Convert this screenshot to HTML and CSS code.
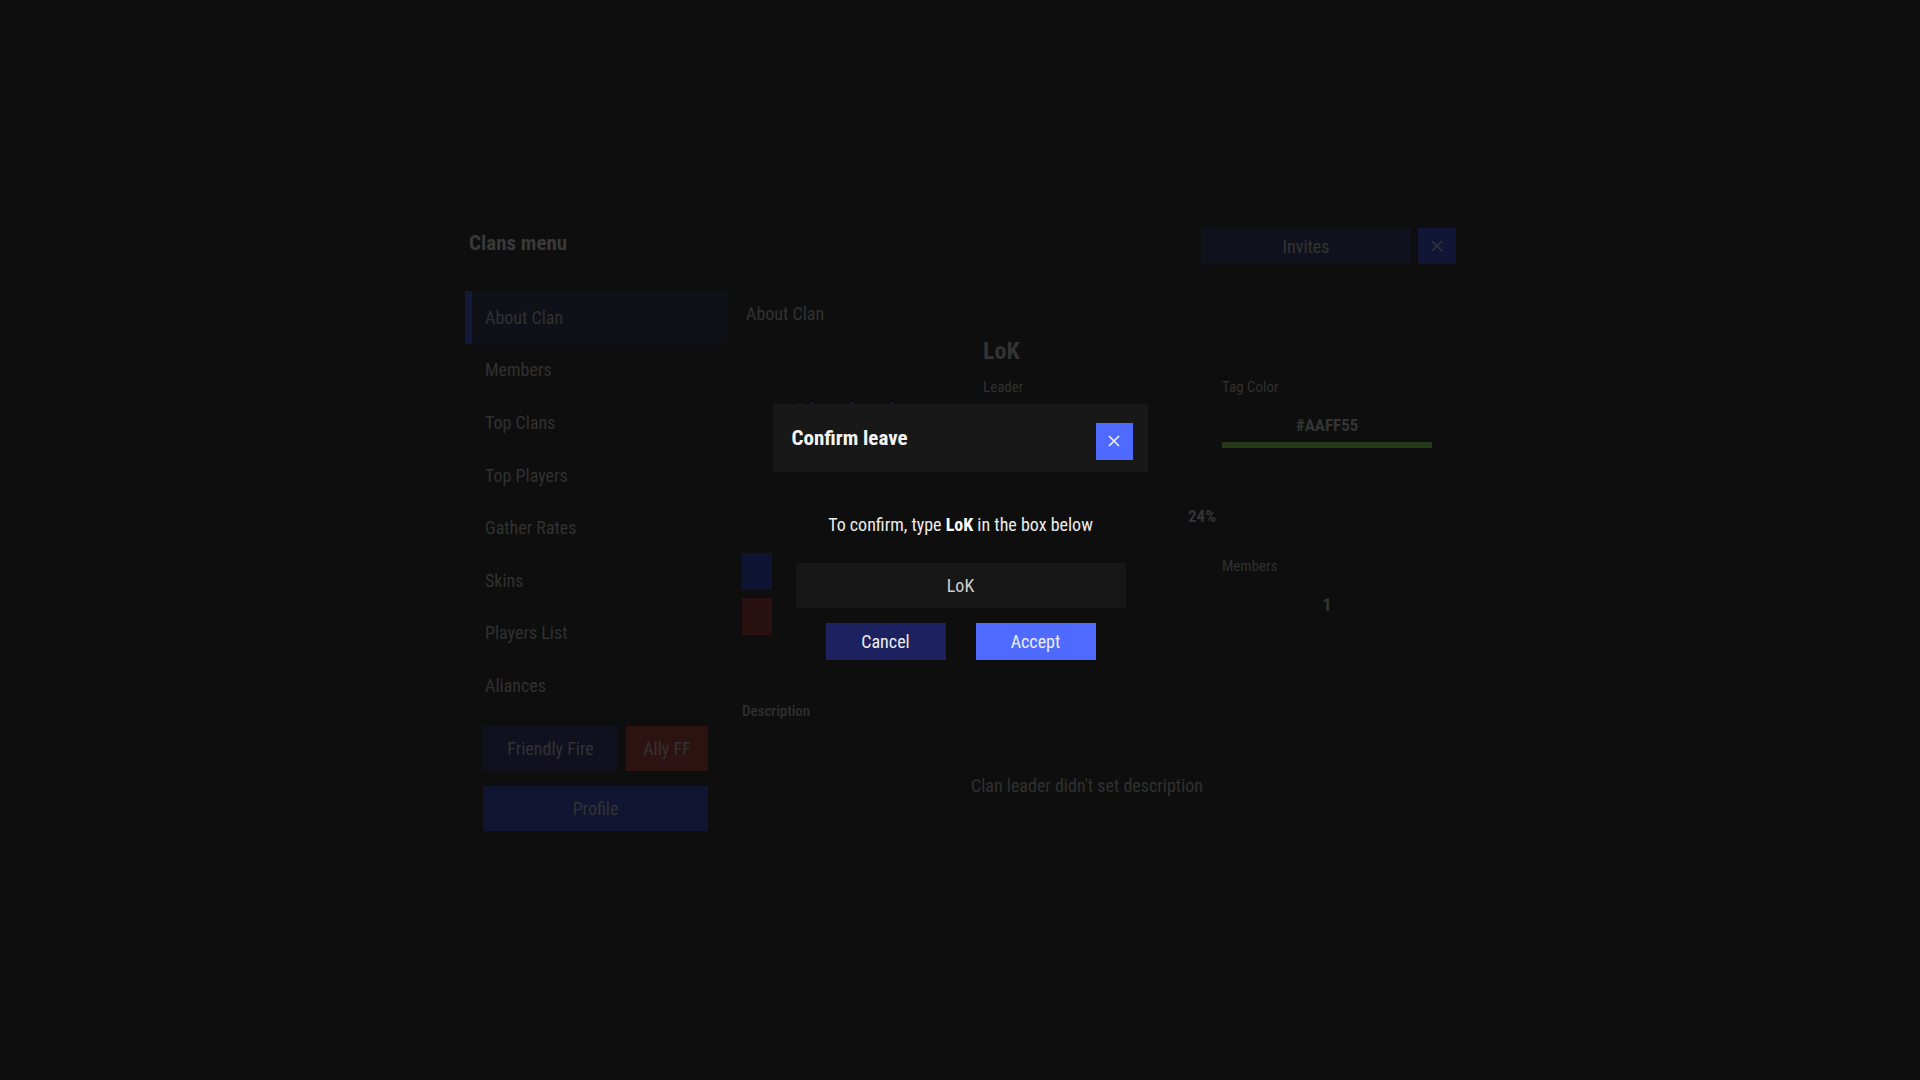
FILE: index.html
```html
<!DOCTYPE html>
<html lang="en">
<head>
<meta charset="utf-8">
<title>Clans menu</title>
<link rel="stylesheet" href="styles.css">
</head>
<body>
<div class="panel">
  <header class="topbar">
    <h1 class="title">Clans menu</h1>
    <div class="top-actions">
      <button class="btn-invites">Invites</button>
      <button class="btn-close-dim" aria-label="Close">
        <svg width="12" height="12" viewBox="0 0 12 12"><path d="M1 1L11 11M11 1L1 11" stroke="#343434" stroke-width="1.6" fill="none"/></svg>
      </button>
    </div>
  </header>
  <div class="body">
    <aside class="sidebar">
      <nav class="menu">
        <div class="menu-item active">About Clan</div>
        <div class="menu-item">Members</div>
        <div class="menu-item">Top Clans</div>
        <div class="menu-item">Top Players</div>
        <div class="menu-item">Gather Rates</div>
        <div class="menu-item">Skins</div>
        <div class="menu-item">Players List</div>
        <div class="menu-item">Aliances</div>
      </nav>
      <div class="side-actions">
        <div class="side-row">
          <button class="btn-ff">Friendly Fire</button>
          <button class="btn-ally">Ally FF</button>
        </div>
        <button class="btn-profile">Profile</button>
      </div>
    </aside>
    <main class="main">
      <div class="main-title">About Clan</div>
      <div class="info">
        <div class="col-left">
          <div class="leader-name">Clan leader</div>
          <div class="sq sq-blue"></div>
          <div class="sq sq-red"></div>
        </div>
        <div class="col-mid">
          <div class="clan-tag">LoK</div>
          <div class="label label-leader">Leader</div>
          <div class="percent">24%</div>
        </div>
        <div class="col-right">
          <div class="label label-tag">Tag Color</div>
          <div class="tag-value">#AAFF55</div>
          <div class="tag-bar"></div>
          <div class="label label-members">Members</div>
          <div class="members-count">1</div>
        </div>
      </div>
      <div class="desc-label">Description</div>
      <div class="desc-text">Clan leader didn't set description</div>
    </main>
  </div>
</div>

<div class="overlay">
  <div class="modal">
    <div class="modal-head">
      <div class="modal-title">Confirm leave</div>
      <button class="modal-close" aria-label="Close">
        <svg width="12" height="12" viewBox="0 0 12 12"><path d="M1 1L11 11M11 1L1 11" stroke="#f2f2f2" stroke-width="1.6" fill="none"/></svg>
      </button>
    </div>
    <div class="modal-body">
      <p class="modal-text">To confirm, type <b>LoK</b> in the box below</p>
      <div class="modal-input">LoK</div>
      <div class="modal-buttons">
        <button class="btn-cancel">Cancel</button>
        <button class="btn-accept">Accept</button>
      </div>
    </div>
  </div>
</div>
</body>
</html>
```
FILE: styles.css
```css
* { box-sizing: border-box; }
html, body { margin: 0; padding: 0; }
body {
  width: 1920px;
  height: 1080px;
  background: #0e0e0e;
  font-family: "Roboto Condensed", "Liberation Sans Narrow", Roboto, sans-serif;
  font-stretch: condensed;
  color: #333;
  overflow: hidden;
}
button {
  font-family: inherit;
  font-stretch: inherit;
  border: 0;
  padding: 0;
  margin: 0;
  cursor: pointer;
}

.panel {
  margin-left: 465px;
  padding-top: 228px;
  width: 991px;
}
.topbar {
  display: flex;
  justify-content: space-between;
  align-items: center;
  height: 36px;
}
.title {
  margin: 0 0 6px 4px;
  font-size: 21px;
  font-weight: 700;
  line-height: 1;
  color: #393939;
}
.top-actions { display: flex; gap: 7px; }
.btn-invites {
  width: 210px;
  height: 36px;
  background: #10111d;
  color: #343434;
  font-size: 18px;
}
.btn-close-dim {
  width: 38px;
  height: 36px;
  background: #111637;
  display: flex;
  align-items: center;
  justify-content: center;
}

.body {
  display: flex;
  margin-top: 27px;
}
.sidebar { width: 262px; flex: none; }
.menu-item {
  height: 52.6px;
  display: flex;
  align-items: center;
  padding-left: 20px;
  font-size: 18px;
  color: #313131;
}
.menu-item.active {
  background: #101018;
  border-left: 7px solid #131939;
  padding-left: 13px;
}
.side-actions {
  padding: 14px 19px 0 18px;
}
.side-row { display: flex; gap: 8px; }
.btn-ff, .btn-ally, .btn-profile {
  height: 45px;
  font-size: 18px;
  color: #333;
}
.btn-ff { width: 135px; background: #10101e; }
.btn-ally { width: 82px; background: #2d1212; }
.btn-profile {
  display: block;
  width: 225px;
  margin-top: 15px;
  background: #121531;
}

.main {
  margin-left: 15px;
  width: 690px;
}
.main-title {
  margin-top: 14px;
  padding-left: 4px;
  font-size: 18px;
  line-height: 1;
  color: #323232;
}
.info {
  display: flex;
  margin-top: 13px;
}
.col-left { width: 241px; display: flex; flex-direction: column; }
.col-mid { width: 239px; display: flex; flex-direction: column; }
.col-right { width: 210px; display: flex; flex-direction: column; }
.leader-name {
  margin-top: 64px;
  padding-left: 50px;
  font-size: 28px;
  font-weight: 700;
  line-height: 1;
  color: #141a44;
}
.sq { width: 30px; height: 37px; }
.sq-blue { background: #0f1433; margin-top: 125px; }
.sq-red { background: #2a1111; margin-top: 8px; }

.clan-tag {
  margin-top: 3px;
  font-size: 24px;
  font-weight: 700;
  line-height: 1;
  color: #333;
}
.label {
  font-size: 15px;
  line-height: 1;
  color: #303030;
}
.label-leader { margin-top: 17px; }
.percent {
  margin-top: 113px;
  padding-right: 6px;
  text-align: right;
  font-size: 17px;
  font-weight: 700;
  line-height: 1;
  color: #333;
}
.label-tag { margin-top: 44px; }
.tag-value {
  margin-top: 22px;
  text-align: center;
  font-size: 17px;
  font-weight: 700;
  line-height: 1;
  color: #343434;
}
.tag-bar {
  margin-top: 8px;
  height: 6px;
  background: #253817;
}
.label-members { margin-top: 111px; }
.members-count {
  margin-top: 21px;
  text-align: center;
  font-size: 19px;
  font-weight: 700;
  line-height: 1;
  color: #343434;
}
.desc-label {
  margin-top: 69px;
  font-size: 15px;
  font-weight: 500;
  line-height: 1;
  color: #303030;
}
.desc-text {
  margin-top: 58px;
  text-align: center;
  font-size: 18px;
  line-height: 1;
  color: #313131;
}

/* modal */
.overlay {
  position: fixed;
  inset: 0;
  display: flex;
  align-items: center;
  justify-content: center;
}
.modal {
  width: 375px;
  background: #0e0e0e;
}
.modal-head {
  height: 68px;
  background: #181818;
  display: flex;
  justify-content: space-between;
  align-items: flex-start;
  padding: 0 15px 0 19px;
}
.modal-title {
  margin-top: 24px;
  font-size: 21px;
  font-weight: 700;
  line-height: 1;
  color: #f4f4f4;
}
.modal-close {
  margin-top: 19px;
  width: 37px;
  height: 37px;
  background: #4f6bff;
  display: flex;
  align-items: center;
  justify-content: center;
}
.modal-body {
  padding: 44px 22px 17px 23px;
}
.modal-text {
  margin: 0;
  text-align: center;
  font-size: 18px;
  line-height: 1;
  color: #ececec;
}
.modal-text b { font-weight: 700; color: #fff; }
.modal-input {
  margin-top: 29px;
  height: 45px;
  background: #171717;
  display: flex;
  align-items: center;
  justify-content: center;
  font-size: 18px;
  font-weight: 400;
  color: #cfcfcf;
}
.modal-buttons {
  margin-top: 15px;
  display: flex;
  justify-content: center;
  gap: 30px;
}
.btn-cancel, .btn-accept {
  width: 120px;
  height: 37px;
  font-size: 18px;
  font-weight: 400;
  color: #ededed;
}
.btn-cancel { background: #1c2260; }
.btn-accept { background: #4f6bff; }
```
